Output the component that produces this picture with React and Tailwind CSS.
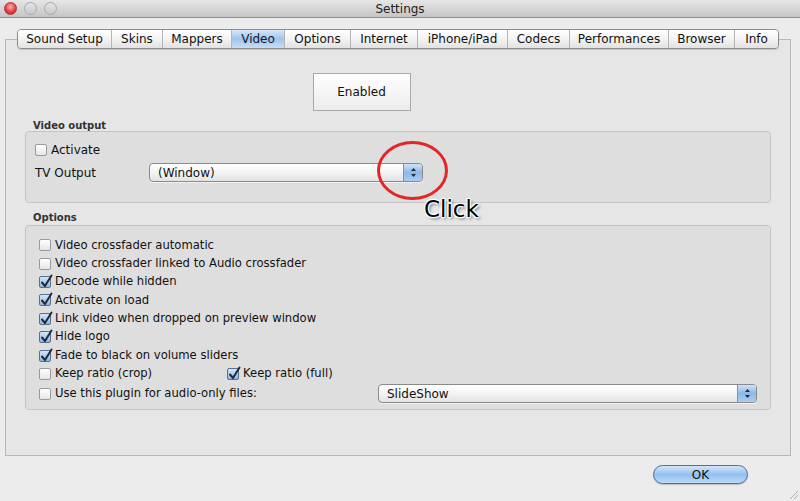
import React from "react";

const tabs = [
	{ label: "Sound Setup", w: 93 },
	{ label: "Skins", w: 51 },
	{ label: "Mappers", w: 69 },
	{ label: "Video", w: 53, active: true },
	{ label: "Options", w: 66 },
	{ label: "Internet", w: 67 },
	{ label: "iPhone/iPad", w: 90 },
	{ label: "Codecs", w: 62 },
	{ label: "Performances", w: 99 },
	{ label: "Browser", w: 66 },
	{ label: "Info", w: 44 },
];

const options = [
	{ label: "Video crossfader automatic", checked: false },
	{ label: "Video crossfader linked to Audio crossfader", checked: false },
	{ label: "Decode while hidden", checked: true },
	{ label: "Activate on load", checked: true },
	{ label: "Link video when dropped on preview window", checked: true },
	{ label: "Hide logo", checked: true },
	{ label: "Fade to black on volume sliders", checked: true },
];

const Checkbox = ({ checked }) => (
	<span
		className={
			"relative inline-block w-[12px] h-[12px] shrink-0 rounded-[2px] border " +
			(checked
				? "border-[#5a6f8c] bg-gradient-to-b from-[#d5e6f7] to-[#8fb6e0]"
				: "border-[#9a9a9a] bg-gradient-to-b from-[#ffffff] to-[#e6e6e6]")
		}
	>
		{checked && (
			<svg className="absolute left-[0px] top-[-3px]" width="13" height="14" viewBox="0 0 13 14">
				<path d="M2 8.5 L5 12 L11.5 1.5" fill="none" stroke="#1d2a40" strokeWidth="2" strokeLinecap="round" strokeLinejoin="round" />
			</svg>
		)}
	</span>
);

const CheckRow = ({ checked, label, className = "" }) => (
	<div className={"flex items-center gap-[4px] " + className}>
		<Checkbox checked={checked} />
		<span>{label}</span>
	</div>
);

const Select = ({ value, className = "" }) => (
	<div
		className={
			"flex items-center h-[19px] rounded-[4px] border border-[#8a8a8a] bg-gradient-to-b from-[#ffffff] via-[#f4f4f4] to-[#e2e2e2] shadow-[0_1px_0_rgba(255,255,255,0.6)] overflow-hidden " +
			className
		}
	>
		<span className="flex-1 pl-[8px]">{value}</span>
		<span className="flex h-full w-[19px] items-center justify-center border-l border-[#7d93b3] bg-gradient-to-b from-[#cfe2f7] via-[#8db8e6] to-[#aacdf2]">
			<svg width="7" height="11" viewBox="0 0 7 11">
				<path d="M3.5 1 L6 4 L1 4 Z" fill="#1d2a40" />
				<path d="M3.5 10 L6 7 L1 7 Z" fill="#1d2a40" />
			</svg>
		</span>
	</div>
);

export default function App() {
	return (
		<div className="relative w-[800px] h-[501px] overflow-hidden bg-[#ececec] text-[11px] text-[#111] font-['Lucida_Grande','DejaVu_Sans',sans-serif]">
			{/* title bar */}
			<div className="relative flex h-[18px] items-center justify-center border-b border-[#8f8f8f] bg-gradient-to-b from-[#e6e6e6] to-[#c6c6c6]">
				<div className="absolute left-[4px] top-[2px] flex gap-[7px]">
					<span className="w-[13px] h-[13px] rounded-full border border-[#a43a3a] bg-[radial-gradient(circle_at_50%_35%,#ffb0b0,#e13a3a_60%,#b02020)]" />
					<span className="w-[13px] h-[13px] rounded-full border border-[#a8a8a8] bg-gradient-to-b from-[#e4e4e4] to-[#c9c9c9]" />
					<span className="w-[13px] h-[13px] rounded-full border border-[#a8a8a8] bg-gradient-to-b from-[#e4e4e4] to-[#c9c9c9]" />
				</div>
				<span className="text-[12px] text-[#222]">Settings</span>
			</div>

			{/* tab view */}
			<div className="px-[5px] pt-[11px] w-[796px]">
				<div className="relative z-10 flex justify-center h-[20px] -mb-[10px]">
					<div className="flex h-[20px] rounded-[4px] border border-[#8c8c8c] overflow-hidden shadow-[0_1px_1px_rgba(0,0,0,0.15)]">
						{tabs.map((t, i) => (
							<div
								key={t.label}
								style={{ width: t.w }}
								className={
									"flex items-center justify-center text-[12px] " +
									(i > 0 ? "border-l border-[#b5b5b5] " : "") +
									(t.active
										? "bg-gradient-to-b from-[#d8e8f8] via-[#9fc4ec] to-[#c9def4] text-[#0b1a33]"
										: "bg-gradient-to-b from-[#ffffff] via-[#f3f3f3] to-[#e2e2e2]")
								}
							>
								{t.label}
							</div>
						))}
					</div>
				</div>

				<div className="h-[417px] border border-[#b9b9b9] bg-[#e6e6e6] px-[19px] pt-[33px]">
					<div className="flex justify-center pr-[73px]">
						<div className="flex items-center justify-center w-[98px] h-[38px] border border-[#a9a9a9] bg-gradient-to-b from-[#ffffff] to-[#ececec] text-[12px]">
							Enabled
						</div>
					</div>

					<div className="mt-[8px] pl-[8px] h-[13px] leading-[13px] font-bold text-[10px] text-[#333]">Video output</div>
					<div className="mt-[-1px] h-[72px] rounded-[4px] border border-[#c4c4c4] bg-[#dedede] pl-[9px] pt-[11px]">
						<CheckRow checked={false} label="Activate" className="h-[13px] text-[12px]" />
						<div className="mt-[7px] flex items-center">
							<span className="w-[114px] text-[12px]">TV Output</span>
							<Select value="(Window)" className="w-[274px] text-[12px]" />
						</div>
					</div>

					<div className="mt-[8px] pl-[8px] h-[14px] leading-[14px] font-bold text-[10px] text-[#333]">Options</div>
					<div className="h-[185px] rounded-[4px] border border-[#c4c4c4] bg-[#dedede] pl-[13px] pt-[10px] text-[11.6px]">
						{options.map((o) => (
							<CheckRow key={o.label} checked={o.checked} label={o.label} className="h-[18.4px]" />
						))}
						<div className="flex h-[18.4px] items-center">
							<CheckRow checked={false} label="Keep ratio (crop)" className="w-[188px]" />
							<CheckRow checked={true} label="Keep ratio (full)" />
						</div>
						<div className="mt-[1px] flex h-[19px] items-center">
							<CheckRow checked={false} label="Use this plugin for audio-only files:" className="w-[339px]" />
							<Select value="SlideShow" className="w-[379px] text-[12px]" />
						</div>
					</div>
				</div>
			</div>

			{/* bottom buttons */}
			<div className="flex justify-end pr-[52px] pt-[9px]">
				<div className="flex items-center justify-center w-[95px] h-[19px] rounded-full border border-[#4d6f99] bg-gradient-to-b from-[#d3e7fb] via-[#92c0ee] to-[#bcdaf7] text-[12px] shadow-[0_1px_1px_rgba(0,0,0,0.2)]">
					OK
				</div>
			</div>

			{/* resize grip */}
			<svg className="absolute right-[1px] bottom-[1px]" width="12" height="12" viewBox="0 0 12 12">
				<path d="M11 3 L3 11 M11 7 L7 11" stroke="#b0b0b0" strokeWidth="1" />
			</svg>

			{/* annotation overlay */}
			<div className="absolute left-[377px] top-[141px] w-[71px] h-[59px] rounded-[50%] border-[3px] border-[#e42525]" />
			<div className="absolute left-[424px] top-[196px] text-[23px] leading-[27px] text-black font-['DejaVu_Sans',sans-serif] [text-shadow:0_0_1px_#fff,0_0_2px_#fff,1px_1px_1px_#fff,-1px_-1px_1px_#fff,1px_-1px_1px_#fff,-1px_1px_1px_#fff,2px_2px_3px_#666]">
				Click
			</div>
		</div>
	);
}
